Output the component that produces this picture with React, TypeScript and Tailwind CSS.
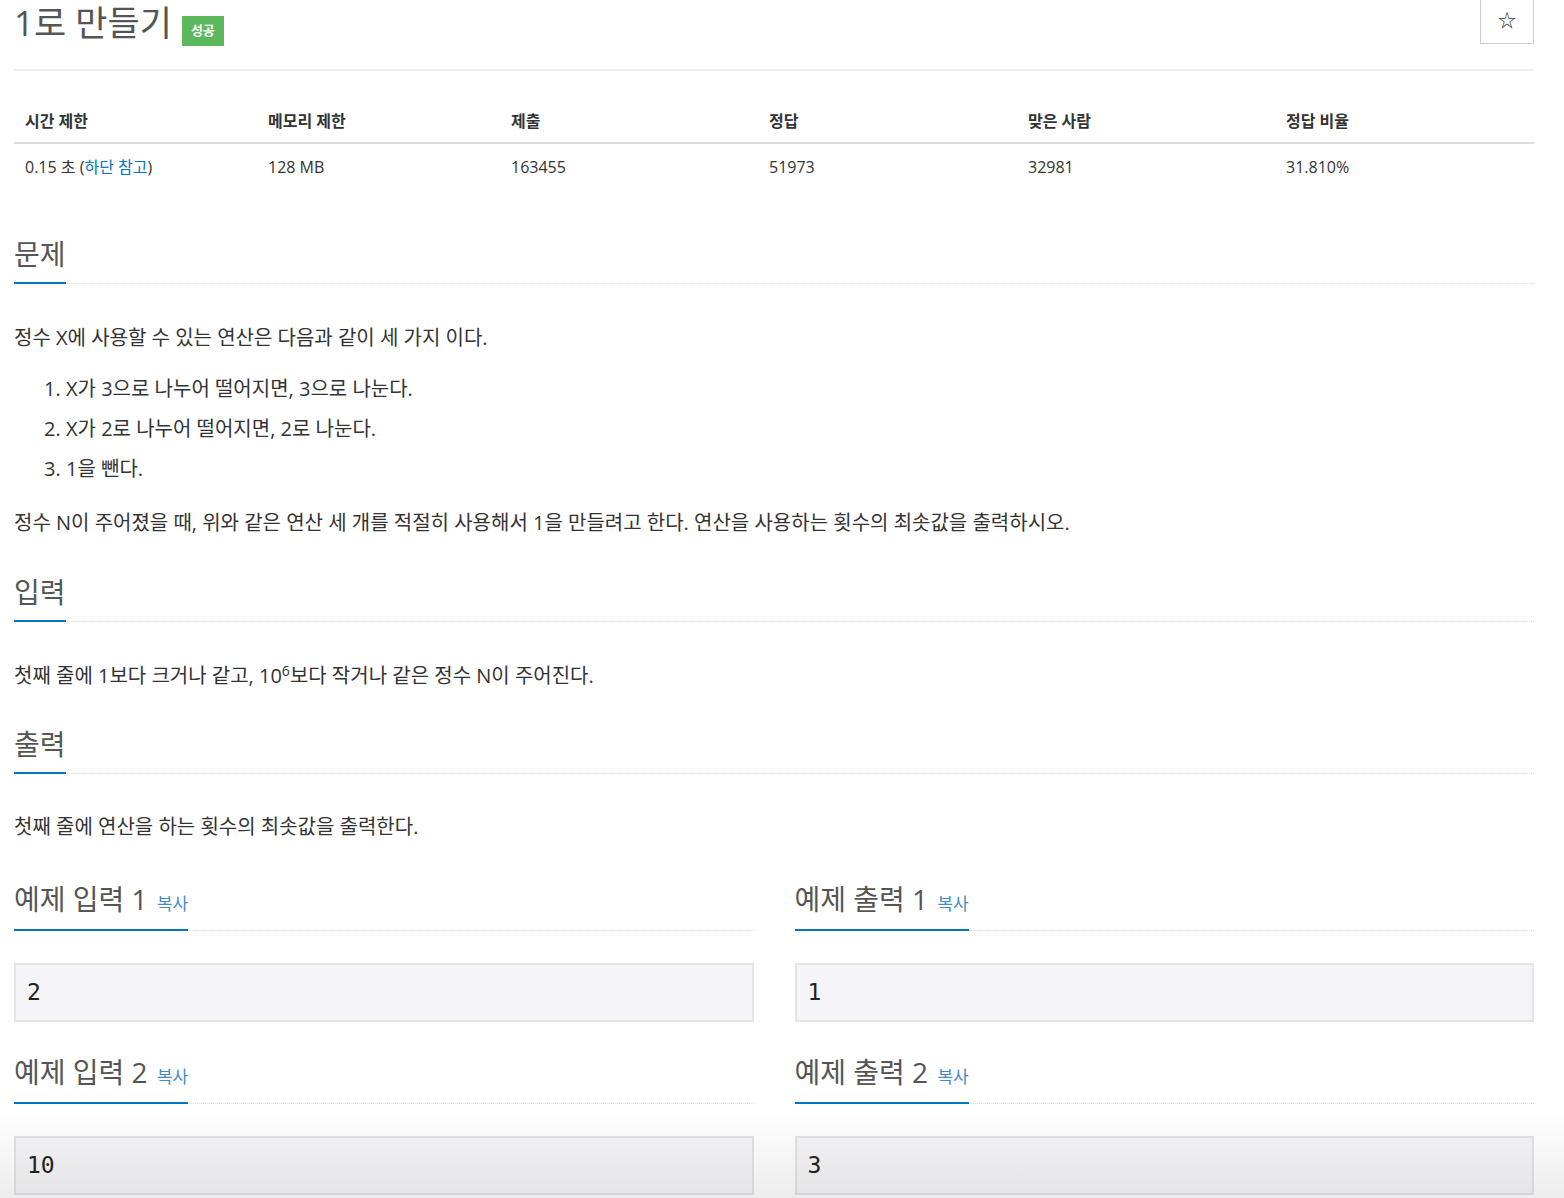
import React from "react";

const FONT = { fontFamily: '"Open Sans", "Noto Sans CJK KR", sans-serif' };

function Headline({
  children,
  className = "",
  pad = "pb-[10px]",
}: {
  children: React.ReactNode;
  className?: string;
  pad?: string;
}) {
  return (
    <div className={`border-b border-dotted border-[#d8dce2] ${className}`}>
      <h2 className={`inline-block -mb-px border-b-2 border-[#0076c0] ${pad} text-[28px] leading-[36px] font-normal text-[#555]`}>
        {children}
      </h2>
    </div>
  );
}

function SampleHead({ title }: { title: string }) {
  return (
    <Headline pad="pb-[7px]">
      {title} <span className="ml-[2px] text-[17px] text-[#428bca]">복사</span>
    </Headline>
  );
}

function Sample({ value }: { value: string }) {
  return (
    <pre
      className="mt-[32px] h-[59px] border-2 border-[#e3e3e8] bg-[#f5f5f7] px-[11px] text-[23px] leading-[55px] text-[#222]"
      style={{ fontFamily: '"DejaVu Sans Mono", monospace' }}
    >
      {value}
    </pre>
  );
}

const stats = [
  ["시간 제한", null],
  ["메모리 제한", "128 MB"],
  ["제출", "163455"],
  ["정답", "51973"],
  ["맞은 사람", "32981"],
  ["정답 비율", "31.810%"],
];

export default function App() {
  return (
    <div className="relative h-[1198px] overflow-hidden bg-white px-[14px] text-[#333]" style={FONT}>
      <div className="w-[1520px]">
        {/* Header */}
        <div className="flex h-[71px] justify-between border-b-2 border-[#eee]">
          <div className="flex items-start">
            <h1 className="mt-[3px] text-[35px] leading-[40px] font-normal text-[#555]">1로 만들기</h1>
            <span className="ml-[10px] mt-[16px] flex h-[30px] items-center bg-[#5cb85c] px-[9px] text-[13px] font-bold text-white">
              성공
            </span>
          </div>
          <button className="-mt-[8px] flex h-[52px] w-[54px] items-center justify-center border border-[#ccc] pt-[4px] text-[18px] text-[#333]">
            ☆
          </button>
        </div>

        {/* Stats table */}
        <div className="mt-[29px] grid grid-cols-[243px_243px_258px_259px_258px_1fr] text-[16px]">
          {stats.map(([h]) => (
            <div key={h} className="flex h-[44px] items-center border-b-2 border-[#ddd] pl-[11px] font-bold">
              {h}
            </div>
          ))}
          {stats.map(([h, v]) => (
            <div key={h + "v"} className="flex h-[44px] items-center pl-[11px] pt-[2px]">
              {v ?? (
                <span>
                  0.15 초 (<a className="text-[#0076c0]">하단 참고</a>)
                </span>
              )}
            </div>
          ))}
        </div>

        {/* 문제 */}
        <Headline className="mt-[48px]">문제</Headline>
        <div className="text-[20px] leading-[30px]">
          <p className="mt-[39px]">정수 X에 사용할 수 있는 연산은 다음과 같이 세 가지 이다.</p>
          <ol className="mt-[16px] list-decimal pl-[52px]">
            <li className="leading-[40px]">X가 3으로 나누어 떨어지면, 3으로 나눈다.</li>
            <li className="leading-[40px]">X가 2로 나누어 떨어지면, 2로 나눈다.</li>
            <li className="leading-[40px]">1을 뺀다.</li>
          </ol>
          <p className="mt-[19px]">
            정수 N이 주어졌을 때, 위와 같은 연산 세 개를 적절히 사용해서 1을 만들려고 한다. 연산을 사용하는 횟수의 최솟값을 출력하시오.
          </p>
        </div>

        {/* 입력 */}
        <Headline className="mt-[36px]">입력</Headline>
        <p className="mt-[39px] text-[20px] leading-[30px]">
          첫째 줄에 1보다 크거나 같고, 10<sup className="text-[14px]">6</sup>보다 작거나 같은 정수 N이 주어진다.
        </p>

        {/* 출력 */}
        <Headline className="mt-[35px]">출력</Headline>
        <p className="mt-[38px] text-[20px] leading-[30px]">첫째 줄에 연산을 하는 횟수의 최솟값을 출력한다.</p>

        {/* Samples */}
        <div className="mt-[39px] grid grid-cols-2 gap-x-[41px]">
          <div>
            <SampleHead title="예제 입력 1" />
            <Sample value="2" />
          </div>
          <div>
            <SampleHead title="예제 출력 1" />
            <Sample value="1" />
          </div>
          <div className="mt-[32px]">
            <SampleHead title="예제 입력 2" />
            <Sample value="10" />
          </div>
          <div className="mt-[32px]">
            <SampleHead title="예제 출력 2" />
            <Sample value="3" />
          </div>
        </div>
      </div>

      {/* bottom fade */}
      <div className="pointer-events-none absolute bottom-0 left-0 h-[90px] w-full bg-gradient-to-b from-transparent to-black/[0.07]" />
    </div>
  );
}
